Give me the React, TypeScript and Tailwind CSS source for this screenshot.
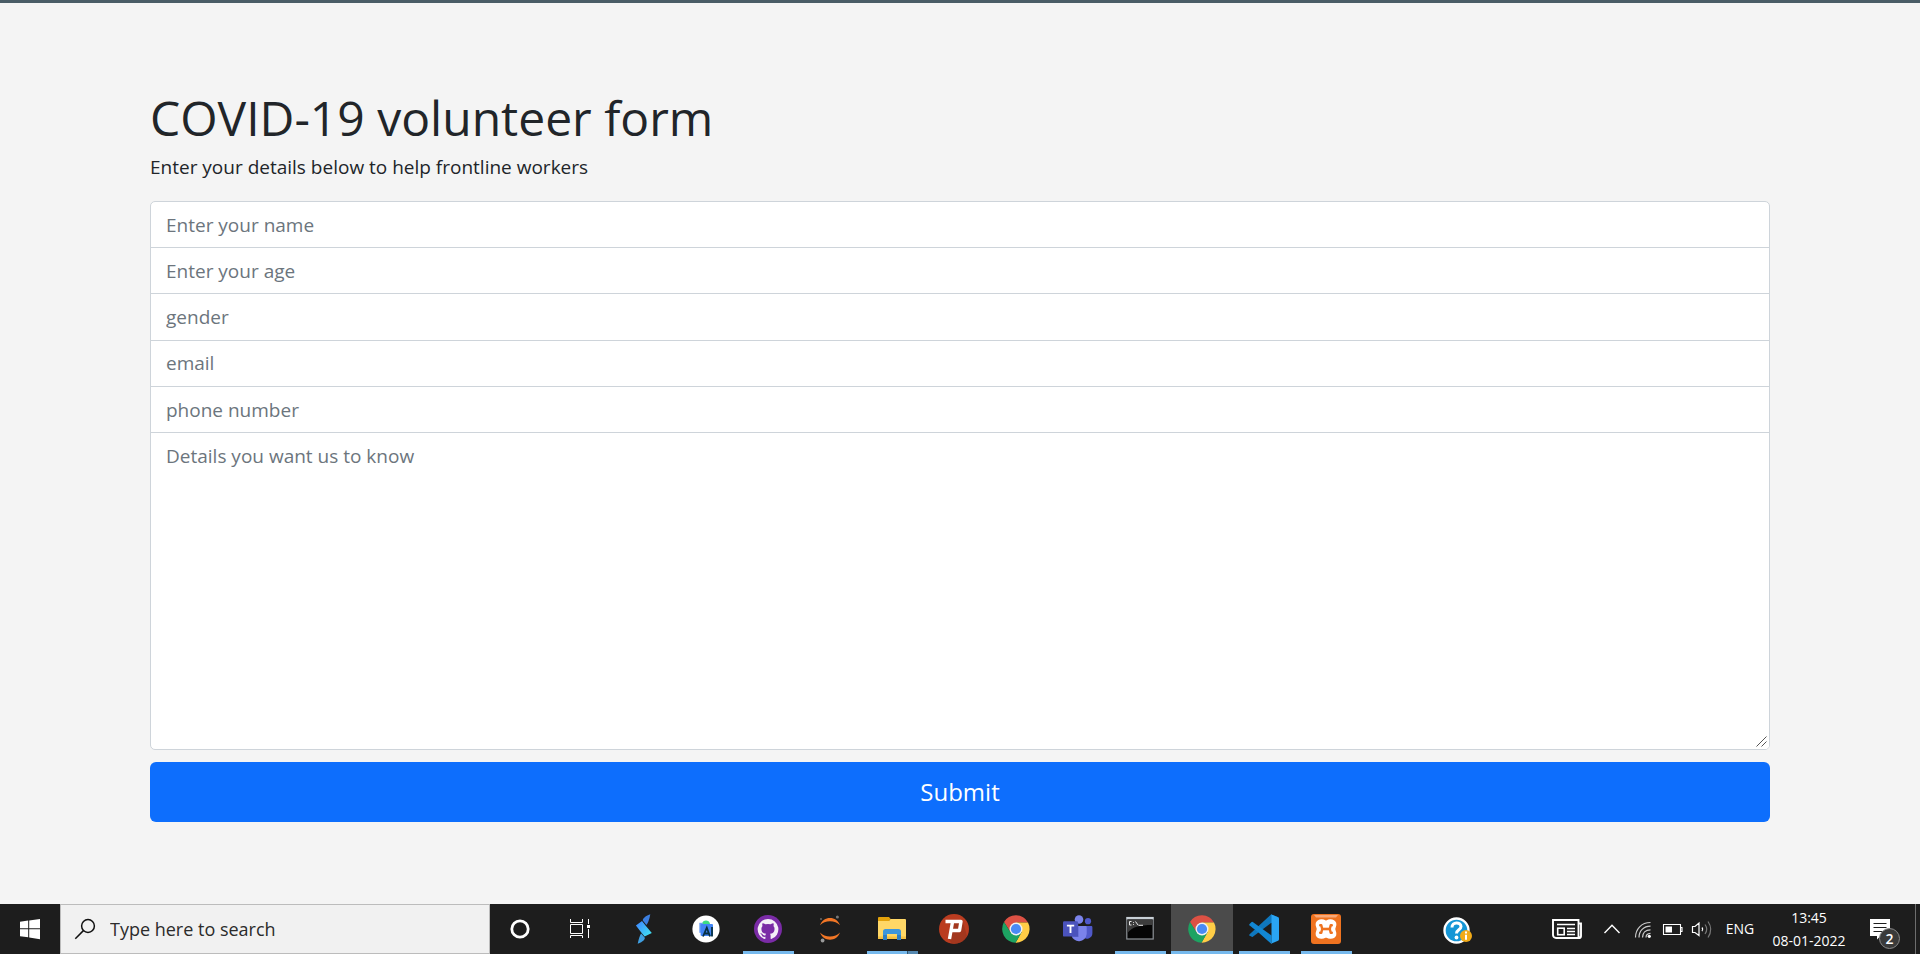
import React from 'react';

type IconProps = { children: React.ReactNode; className?: string };

function Icon({ children, className = 'h-[30px] w-[30px]' }: IconProps) {
  return (
    <svg viewBox="0 0 30 30" className={className} fill="none" aria-hidden="true">
      {children}
    </svg>
  );
}

function StartIcon() {
  return (
    <Icon>
      <path fill="#fff" d="M5 7.8 13.2 6.5V14.2H5zM14.2 6.4 25 5V14.2H14.2zM5 15.2H13.2V23.3L5 22.2zM14.2 15.2H25V25.2L14.2 23.6z" />
    </Icon>
  );
}

function SearchIcon() {
  return (
    <Icon>
      <circle cx="18" cy="12" r="6.4" stroke="#111" strokeWidth="1.5" />
      <path d="M13.4 16.6 5.3 24.7" stroke="#111" strokeWidth="1.5" />
    </Icon>
  );
}

function CortanaIcon() {
  return (
    <Icon>
      <circle cx="15" cy="15" r="8.2" stroke="#fff" strokeWidth="2.8" />
    </Icon>
  );
}

function TaskViewIcon() {
  return (
    <Icon>
      <path d="M5.5 5V8.5H17.5V5M5.5 24V21.5H17.5V24M5.5 10.5H17.5V19.5H5.5zM23.5 5V10M23.5 15V24" stroke="#fff" strokeWidth="1" />
      <path fill="#fff" d="M22 11h3v3h-3z" />
    </Icon>
  );
}

function FlashIcon() {
  return (
    <Icon>
      <defs>
        <linearGradient id="flashRibbon" x1="7" y1="8" x2="22" y2="22" gradientUnits="userSpaceOnUse">
          <stop stopColor="#3f83ff" />
          <stop offset="1" stopColor="#3fe6f2" />
        </linearGradient>
      </defs>
      <path fill="#3c7fe0" d="M21.3.2C16 2.2 13.5 4.500 13.800 6.500L17.400 11C19 9 20.500 5 21.300.2z" />
      <path fill="#3f9ee0" d="M8.700 29.800C14 27.800 16.800 24.800 15.500 23.200L12.200 19.500C11 21 9.500 25 8.700 29.800z" />
      <path fill="url(#flashRibbon)" d="M13 7 16.500 11.500 22.800 19 15.600 22.500 12.500 18.800 6.900 11.500z" />
    </Icon>
  );
}

function AndroidStudioIcon() {
  return (
    <Icon>
      <circle cx="15" cy="15" r="13.6" fill="#fff" />
      <path fill="#3ddc84" d="M11 9.5a4.2 4.2 0 0 1 8 0l-1 1.5h-6z" />
      <rect x="8.3" y="8.8" width="3.5" height="10" fill="#6b9ff5" />
      <rect x="9.6" y="10" width="12.4" height="12" rx="1" fill="#4285f4" />
      <path d="M12 22.5 15.8 13.6 19 22.5M13.6 19.5H17.6M21 13V22.5" stroke="#073042" strokeWidth="1.8" />
    </Icon>
  );
}

function GithubDesktopIcon() {
  return (
    <Icon>
      <circle cx="15" cy="15" r="14" fill="#7a2ba6" />
      <g transform="translate(4.7 4.7) scale(.86)">
        <path
          fill="#f4eff7"
          d="M12 .3a12 12 0 0 0-3.8 23.4c.6.1.8-.3.8-.6v-2c-3.3.7-4-1.6-4-1.6-.6-1.4-1.4-1.8-1.4-1.8-1-.7.1-.7.1-.7 1.2 0 1.9 1.2 1.9 1.2 1 1.8 2.8 1.3 3.5 1 0-.8.4-1.3.7-1.6-2.7-.3-5.5-1.3-5.5-6 0-1.2.5-2.3 1.3-3.1-.2-.4-.6-1.6 0-3.2 0 0 1-.3 3.4 1.2a11.5 11.5 0 0 1 6 0c2.3-1.5 3.3-1.2 3.3-1.2.6 1.6.2 2.8 0 3.2.9.8 1.3 1.9 1.3 3.2 0 4.6-2.8 5.6-5.5 5.9.5.4.9 1 .9 2.2v3.3c0 .3.1.7.8.6A12 12 0 0 0 12 .3"
        />
      </g>
    </Icon>
  );
}

function JupyterIcon() {
  return (
    <Icon>
      <path fill="#f37726" d="M5 11.2C7 6.2 10.5 4 15 4s8 2.2 10 7.2C22.500 8.500 19 7.200 15 7.200S7.500 8.500 5 11.200zM5 18.500C7 23.500 10.500 25.700 15 25.700s8-2.200 10-7.200c-2.500 2.700-6 4-10 4s-7.500-1.300-10-4z" />
      <circle cx="22.4" cy="3" r="1.5" fill="#777" />
      <circle cx="6" cy="5" r="1" fill="#666" />
      <circle cx="7.6" cy="26.5" r="1.9" fill="#9a9a9a" />
    </Icon>
  );
}

function ExplorerIcon() {
  return (
    <Icon>
      <path fill="#e3a20b" d="M1 4a1 1 0 0 1 1-1h10l2 2.500h-1L12 8H1z" />
      <path fill="#ffd766" d="M1 7h11l1.500-2H28a1 1 0 0 1 1 1v18.500H1z" />
      <path fill="#f5c143" d="M1 22.500h28V25H1z" />
      <path fill="#3d96dc" d="M6 26V17.500A2.500 2.500 0 0 1 8.500 15h13a2.500 2.500 0 0 1 2.500 2.500V26h-4v-6H10v6z" />
      <path fill="#2f7fc4" d="M6 21h4v5H6zM20 21h4v5h-4z" />
    </Icon>
  );
}

function PsiphonIcon() {
  return (
    <Icon>
      <circle cx="15" cy="15" r="15" fill="#ba3c20" />
      <path fill="#87301c" d="M7 7 14 14 9.500 25 13 29.800A15 15 0 0 0 28 22L24 8z" opacity=".45" />
      <path d="M6.500 7.500H22L20.500 16.500H11.500M13.500 8 10.500 25" stroke="#fff" strokeWidth="3.400" strokeLinejoin="round" />
    </Icon>
  );
}

function ChromeIcon() {
  return (
    <Icon>
      <path fill="#dd5144" d="M3 8.1A13.8 13.8 0 0 1 27 8.6H15L9.500 18.200z" />
      <path fill="#ffcd46" d="M27 8.6A13.8 13.8 0 0 1 14.500 28.800L20.500 18.200 15 8.600z" />
      <path fill="#1da362" d="M3 8.1A13.8 13.8 0 0 0 14.500 28.800L20.500 18.200H9.500z" />
      <circle cx="15" cy="15" r="6.5" fill="#f1f1f1" />
      <circle cx="15" cy="15" r="5.1" fill="#4a8af4" />
    </Icon>
  );
}

function TeamsIcon() {
  return (
    <Icon>
      <circle cx="16" cy="5.5" r="4.3" fill="#7b83eb" />
      <circle cx="25" cy="7.2" r="3.1" fill="#5059c9" />
      <path fill="#5059c9" d="M20 12h8.200c.7 0 1.200.5 1.200 1.200V19a5.500 5.500 0 0 1-9.400 4z" />
      <path fill="#7b83eb" d="M10 12h12.500c.7 0 1.200.5 1.200 1.200V20a7.800 7.800 0 0 1-15.400 1z" />
      <path fill="#4048a8" d="M9 9h6.500v14H9z" opacity=".5" />
      <rect y="7.3" width="15" height="15.3" rx="1.2" fill="#4b53bc" />
      <path d="M3.9 11.600H11.200M7.500 11.600V18.900" stroke="#fff" strokeWidth="1.900" />
    </Icon>
  );
}

function TerminalIcon() {
  return (
    <Icon>
      <rect x="1.8" y="3.5" width="26.4" height="21.5" fill="#050505" stroke="#8f9499" strokeWidth="1.2" />
      <path fill="#c8d0d6" d="M1.500 3h27v2.400h-27z" />
      <path fill="#3c3c3c" d="M2.500 5.500h25v5.500C14 11 7 13 2.500 19z" />
      <path d="M6.500 7.500H4.500V11H6.500M8.500 8.200v.8M8.500 10.200v.8M10.500 7.500 13 11M13.500 11.300H18" stroke="#e8e8e8" strokeWidth="1" />
    </Icon>
  );
}

function VSCodeIcon() {
  return (
    <Icon>
      <path fill="#0f77bd" d="M.6 20.2 22 .6 29.600 3.300V8.500L22 9 3.800 22.700a1.200 1.200 0 0 1-1.500-.1L.6 21.800a1.100 1.100 0 0 1 0-1.600z" />
      <path fill="#1287d3" d="M.6 10 2.300 8.200a1.200 1.200 0 0 1 1.500-.1L22.500 21.500V30C8 17 .6 11.600.6 11.600a1.100 1.100 0 0 1 0-1.600z" />
      <path fill="#2aa5f3" d="M22 .3 29 3.200c.6.3 1 .9 1 1.600v20.400c0 .7-.4 1.300-1 1.600L22 29.700c.4-.5.5-.9.5-1.500V1.800c0-.6-.1-1-.5-1.500z" />
    </Icon>
  );
}

function XamppIcon() {
  return (
    <Icon>
      <rect width="30" height="30" rx="3" fill="#ef7320" />
      <path fill="#f8a878" d="M3 1h24l-2 2.500H5z" />
      <path
        d="M15 9.500C13.500 6.500 8 6 6.500 9.500 5.800 12 7.500 12.500 7.500 15 7.500 17.500 5.800 18.500 6.500 20.800 8 24 13.500 23.500 15 20.500 16.500 23.500 22 24 23.500 20.800 24.200 18.500 22.500 17.500 22.500 15 22.500 12.500 24.200 12 23.500 9.500 22 6 16.500 6.500 15 9.500z"
        fill="#fff"
        stroke="#fff"
        strokeWidth="3.6"
        strokeLinejoin="round"
      />
      <path d="M11 15H19" stroke="#ef7320" strokeWidth="2.6" />
      <path d="M9.200 11.200H10.300L11.200 15 10.300 18.800H9.200M20.800 11.200H19.700L18.800 15 19.700 18.800H20.800" stroke="#ef7320" strokeWidth="2.400" strokeLinecap="round" strokeLinejoin="round" />
    </Icon>
  );
}

function HelpIcon() {
  return (
    <Icon>
      <circle cx="14.5" cy="16.5" r="12" fill="#1596d6" stroke="#fff" strokeWidth="2.4" />
      <path d="M10 13.500C9.800 7.500 19 7.800 19 12.500 19 16 14.500 15.500 14.500 19.500" stroke="#fff" strokeWidth="3" />
      <circle cx="14.5" cy="23.5" r="1.9" fill="#fff" />
      <circle cx="24" cy="22" r="6" fill="#f2ab18" />
      <path d="M24 20.800V25.800M24 17.500V19.500" stroke="#fff" strokeWidth="2" />
    </Icon>
  );
}

function NewsIcon() {
  return (
    <Icon>
      <path d="M1 6H26.500V22.500a2 2 0 0 0 2 1.500H4a3 3 0 0 1-3-3zM26.500 9.500H29V22a2 2 0 0 1-2 2" stroke="#fff" strokeWidth="1.900" />
      <path d="M5 10.500H23M15 14.500H23M15 17.500H23M15 20.500H23" stroke="#fff" strokeWidth="1.400" />
      <rect x="5.7" y="14.2" width="6.5" height="6.5" stroke="#fff" strokeWidth="1.6" />
    </Icon>
  );
}

function ChevronIcon() {
  return (
    <Icon>
      <path d="M7.500 19 15 11.200 22.500 19" stroke="#fff" strokeWidth="1.400" />
    </Icon>
  );
}

function WifiIcon() {
  return (
    <Icon>
      <path d="M8.500 23.500C8.500 15 14.500 8.500 23.500 8.500M12 23.500C12 17 16.500 12.200 23.500 12.200M15.500 23.500C15.500 19 18.500 15.800 23.500 15.800M19 23.500C19 21 20.500 19.500 23.500 19.300" stroke="#ccc" strokeWidth="1.200" />
      <circle cx="22.3" cy="22.3" r="1.6" fill="#fff" />
    </Icon>
  );
}

function BatteryIcon() {
  return (
    <Icon>
      <path d="M6.500 10.500H23.500V20.500H6.500zM23.500 13.500H25V17.500H23.500" stroke="#fff" strokeWidth="1.100" />
      <path fill="#fff" d="M8.500 12.500h6.500v6H8.500z" />
    </Icon>
  );
}

function SpeakerIcon() {
  return (
    <Icon>
      <path d="M5.500 12.500H8L12 9V21.500L8 18.500H5.500zM15 13.500Q16.500 15.300 15 17.200" stroke="#fff" strokeWidth="1.200" />
      <path d="M18 10.500Q21.500 15.300 18 20M21 7.500Q26.500 15.300 21 23.500" stroke="#777" strokeWidth="1.200" />
    </Icon>
  );
}

function NoteIcon() {
  return (
    <Icon>
      <path fill="#fff" d="M5 5H25V22H15.500L12 25.500V22H5z" />
      <path d="M8.500 9.500H21.500M8.500 13.500H21.500M8.500 17.500H21.500" stroke="#1d1d1d" strokeWidth="1.200" />
    </Icon>
  );
}

type TaskbarApp = { name: string; icon: React.ReactNode; open?: boolean; active?: boolean; stacked?: boolean };

const apps: TaskbarApp[] = [
  { name: 'Flash', icon: <FlashIcon /> },
  { name: 'Android Studio', icon: <AndroidStudioIcon /> },
  { name: 'GitHub Desktop', icon: <GithubDesktopIcon />, open: true },
  { name: 'Jupyter', icon: <JupyterIcon /> },
  { name: 'File Explorer', icon: <ExplorerIcon />, open: true, stacked: true },
  { name: 'Psiphon', icon: <PsiphonIcon /> },
  { name: 'Chrome', icon: <ChromeIcon /> },
  { name: 'Teams', icon: <TeamsIcon /> },
  { name: 'Command Prompt', icon: <TerminalIcon />, open: true },
  { name: 'Chrome window', icon: <ChromeIcon />, active: true },
  { name: 'Visual Studio Code', icon: <VSCodeIcon />, open: true },
  { name: 'XAMPP', icon: <XamppIcon />, open: true },
];

function AppButton({ app }: { app: TaskbarApp }) {
  return (
    <button
      type="button"
      aria-label={app.name}
      className={`flex w-[62px] flex-col items-center ${app.active ? 'bg-[#4b4b4b]' : ''}`}
    >
      <span className="flex h-[47px] items-center pt-[3px]">{app.icon}</span>
      {app.active && <span className="h-[3px] w-full bg-[#76b9ed]" />}
      {app.open && (
        <span className="flex h-[3px] w-[51px] bg-[#76b9ed]">
          {app.stacked && <span className="ml-auto w-[11px] border-l border-[#31536c] bg-[#5588b0]" />}
        </span>
      )}
    </button>
  );
}

function TrayButton({ label, children, className = 'w-[30px]' }: { label: string; children: React.ReactNode; className?: string }) {
  return (
    <button type="button" aria-label={label} className={`flex items-center justify-center ${className}`}>
      {children}
    </button>
  );
}

function Taskbar() {
  return (
    <footer className="flex h-[50px] bg-[#1d1d1d] text-white">
      <TrayButton label="Start" className="w-[60px]">
        <StartIcon />
      </TrayButton>
      <label className="flex w-[430px] items-center gap-[10px] border border-[#bcbcbc] bg-[#f1f1f1] pl-[9px]">
        <SearchIcon />
        <input
          type="search"
          aria-label="Search"
          placeholder="Type here to search"
          className="min-w-0 flex-1 bg-transparent text-lg text-[#222] outline-none placeholder:text-[#2b2b2b]"
        />
      </label>
      <TrayButton label="Cortana" className="w-[60px]">
        <CortanaIcon />
      </TrayButton>
      <TrayButton label="Task View" className="mr-[3px] w-[60px]">
        <TaskViewIcon />
      </TrayButton>
      {apps.map((app) => (
        <AppButton key={app.name} app={app} />
      ))}
      <div className="ml-auto flex">
        <TrayButton label="Help" className="mr-[80px]">
          <HelpIcon />
        </TrayButton>
        <TrayButton label="News" className="mr-[15px]">
          <NewsIcon />
        </TrayButton>
        <TrayButton label="Show hidden icons">
          <ChevronIcon />
        </TrayButton>
        <TrayButton label="Network">
          <WifiIcon />
        </TrayButton>
        <TrayButton label="Battery">
          <BatteryIcon />
        </TrayButton>
        <TrayButton label="Volume">
          <SpeakerIcon />
        </TrayButton>
        <button type="button" className="w-[46px] text-sm">
          ENG
        </button>
        <button type="button" className="flex w-[92px] flex-col items-center justify-center text-sm leading-[23px]">
          <span>13:45</span>
          <span>08-01-2022</span>
        </button>
        <button type="button" aria-label="Notifications" className="relative flex w-[60px] items-center pl-[10px]">
          <NoteIcon />
          <span className="absolute top-[24px] left-[24px] flex h-[21px] w-[21px] items-center justify-center rounded-full border border-[#8a8a8a] bg-[#3a3a3a] text-sm font-semibold">
            2
          </span>
        </button>
        <button type="button" aria-label="Show desktop" className="w-[5px] border-l border-[#6d6d6d]" />
      </div>
    </footer>
  );
}

const fields = [
  { id: 'name', type: 'text', placeholder: 'Enter your name' },
  { id: 'age', type: 'text', placeholder: 'Enter your age' },
  { id: 'gender', type: 'text', placeholder: 'gender' },
  { id: 'email', type: 'email', placeholder: 'email' },
  { id: 'phone', type: 'tel', placeholder: 'phone number' },
];

export default function App() {
  return (
    <div className="flex min-h-screen flex-col border-t-[3px] border-[#4a5c66] bg-[#f4f4f4] font-['Open_Sans','Noto_Sans',sans-serif] text-[#212529]">
      <main className="flex-1 px-[150px] pt-[85px] pb-[80px]">
        <h1 className="text-[48px] leading-[60px]">COVID-19 volunteer form</h1>
        <p className="mt-[4px] text-[19px] leading-[30px]">Enter your details below to help frontline workers</p>
        <form className="mt-[19px] flex flex-col" onSubmit={(e) => e.preventDefault()}>
          <div className="relative flex flex-col overflow-hidden rounded-[5px] border border-[#ced4da] bg-white">
            <div className="grid h-[231px] grid-rows-5">
              {fields.map((f) => (
                <input
                  key={f.id}
                  id={f.id}
                  name={f.id}
                  type={f.type}
                  aria-label={f.placeholder}
                  placeholder={f.placeholder}
                  className="border-b border-[#ced4da] px-[15px] pt-px text-[19px] outline-none placeholder:text-[#6c757d]"
                />
              ))}
            </div>
            <textarea
              id="details"
              name="details"
              aria-label="Details you want us to know"
              placeholder="Details you want us to know"
              className="h-[316px] resize-y px-[15px] py-[8px] text-[19px] leading-[30px] outline-none placeholder:text-[#6c757d]"
            />
            <svg viewBox="0 0 14 14" className="pointer-events-none absolute right-0 bottom-0 h-[14px] w-[14px] bg-white" aria-hidden="true">
              <path d="M1.500 11.500 11.500 1.500M6.500 11.500 11.500 6.500" stroke="#555" strokeWidth="1" />
            </svg>
          </div>
          <button type="submit" className="mt-[12px] h-[60px] rounded-[6px] bg-[#0d6efd] text-2xl text-white">
            Submit
          </button>
        </form>
      </main>
      <Taskbar />
    </div>
  );
}
